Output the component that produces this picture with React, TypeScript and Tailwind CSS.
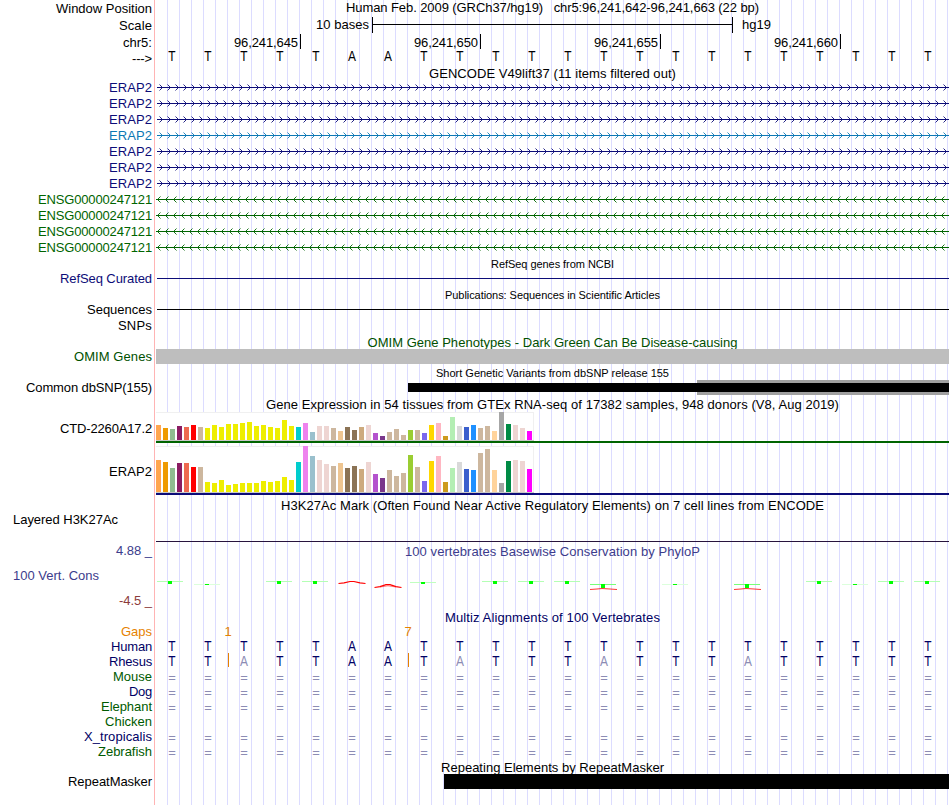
import { useLayoutEffect, useRef } from "react";

/** Text whose letter spacing is tuned so that it spans `w` pixels. */
function Fit({ children, w, className = "" }: { children: string; w?: number; className?: string }) {
  const ref = useRef<HTMLSpanElement>(null);
  useLayoutEffect(() => {
    const el = ref.current;
    if (!el || !w) return;
    el.style.letterSpacing = "0px";
    const natural = el.getBoundingClientRect().width;
    el.style.letterSpacing = `${(w - natural) / children.length}px`;
  }, [children, w]);
  return (
    <span ref={ref} className={`inline-block whitespace-pre ${className}`}>
      {children}
    </span>
  );
}

const NAVY = "text-[#0c0c78]";
const GREEN = "text-[#006400]";
const DEEP = "text-[#000064]";

type Label = { t: string; w?: number; gap?: string; c?: string };

const labels: Label[] = [
  { t: "Window Position", w: 96, gap: "mt-px" },
  { t: "Scale", w: 33, gap: "mt-0.5" },
  { t: "chr5:", w: 29, gap: "mt-0.5" },
  { t: "--->", w: 20, gap: "mt-px" },
  { t: "ERAP2", w: 43, gap: "mt-3.5", c: NAVY },
  { t: "ERAP2", w: 43, gap: "mt-px", c: NAVY },
  { t: "ERAP2", w: 43, gap: "mt-px", c: NAVY },
  { t: "ERAP2", w: 43, gap: "mt-px", c: "text-[#0c78b4]" },
  { t: "ERAP2", w: 43, gap: "mt-px", c: NAVY },
  { t: "ERAP2", w: 43, gap: "mt-px", c: NAVY },
  { t: "ERAP2", w: 43, gap: "mt-px", c: NAVY },
  { t: "ENSG00000247121", w: 114, gap: "mt-px", c: GREEN },
  { t: "ENSG00000247121", w: 114, gap: "mt-px", c: GREEN },
  { t: "ENSG00000247121", w: 114, gap: "mt-px", c: GREEN },
  { t: "ENSG00000247121", w: 114, gap: "mt-px", c: GREEN },
  { t: "RefSeq Curated", w: 92, gap: "mt-4", c: NAVY },
  { t: "Sequences", w: 65, gap: "mt-4" },
  { t: "SNPs", w: 34, gap: "mt-px" },
  { t: "OMIM Genes", w: 78, gap: "mt-4", c: "text-[#005000]" },
  { t: "Common dbSNP(155)", w: 126, gap: "mt-4" },
  { t: "CTD-2260A17.2", w: 92, gap: "mt-[26px]" },
  { t: "ERAP2", w: 43, gap: "mt-7" },
];

const species: { t: string; w: number; c: string }[] = [
  { t: "Human", w: 41, c: DEEP },
  { t: "Rhesus", w: 43, c: DEEP },
  { t: "Mouse", w: 39, c: "text-[#005a00]" },
  { t: "Dog", w: 23, c: DEEP },
  { t: "Elephant", w: 51, c: "text-[#005a00]" },
  { t: "Chicken", w: 47, c: "text-[#005a00]" },
  { t: "X_tropicalis", w: 68, c: DEEP },
  { t: "Zebrafish", w: 54, c: "text-[#005a00]" },
];

function LabelColumn() {
  return (
    <div className="flex w-[154px] shrink-0 flex-col items-end pr-0.5">
      {labels.map((l, i) => (
        <div key={i} className={`h-[15px] ${l.gap} ${l.c ?? ""}`}>
          <Fit w={l.w}>{l.t}</Fit>
        </div>
      ))}
      <div className="mt-[33px] h-[15px] self-start pl-[13px]">
        <Fit w={105}>Layered H3K27Ac</Fit>
      </div>
      <div className="mt-4 h-[15px] text-[#3c3c8c]"><Fit w={36}>4.88 _</Fit></div>
      <div className="mt-2.5 h-[15px] self-start pl-[13px] text-[#3c3c8c]">
        <Fit w={86}>100 Vert. Cons</Fit>
      </div>
      <div className="mt-2.5 h-[15px] text-[#8c3c3c]"><Fit w={33}>-4.5 _</Fit></div>
      <div className="mt-4 h-[15px] text-[#e68200]"><Fit w={31}>Gaps</Fit></div>
      {species.map((s) => (
        <div key={s.t} className={`h-[15px] ${s.c}`}>
          <Fit w={s.w}>{s.t}</Fit>
        </div>
      ))}
      <div className="mt-[15px] h-[15px]"><Fit w={84}>RepeatMasker</Fit></div>
    </div>
  );
}

function Arrows({ dir, color }: { dir: "r" | "l"; color: string }) {
  let d = "";
  for (let k = 0; k < 99; k++) {
    const x = dir === "r" ? 6.5 + 8 * k : 1.5 + 8 * k;
    const b = dir === "r" ? x - 3 : x + 3;
    d += `M${b} 4.5L${x} 7.5L${b} 10.5`;
  }
  return (
    <svg width="793" height="16" className="block" stroke={color} fill="none">
      <path d={dir === "r" ? "M1 7.5H793" : "M0 7.5H793"} />
      <path d={d} strokeWidth="0.9" />
    </svg>
  );
}

function Title({ t, w, className }: { t: string; w: number; className: string }) {
  return (
    <div className={`flex justify-center ${className}`}>
      <Fit w={w}>{t}</Fit>
    </div>
  );
}

function Bases({ seq, className }: { seq: string; className: string }) {
  return (
    <div className={`-ml-0.5 flex h-[15px] ${className}`}>
      {seq.split("").map((b, i) => (
        <span
          key={i}
          className={`w-9 shrink-0 text-center ${b === "=" ? "" : "scale-x-[.85] text-[14px] leading-[14px]"} ${b === "a" ? "text-[#8c8cb4]" : ""}`}
        >
          {b.toUpperCase()}
        </span>
      ))}
    </div>
  );
}

const tissueColors = [
  "#FFA54F", "#EE9A00", "#8FBC8F", "#8B1C62", "#EE6A50", "#FF0000", "#CDB79E",
  ...Array<string>(13).fill("#EEEE00"),
  "#00CDCD", "#EE82EE", "#9AC0CD", "#EED5D2", "#EED5D2", "#CDB79E", "#EEC591", "#8B7355", "#8B7355",
  "#CDAA7D", "#EED5D2", "#B452CD", "#7A378B", "#CDB79E", "#CDB79E", "#CDB79E", "#9ACD32", "#CDB79E",
  "#7A67EE", "#FFD700", "#FFB6C1", "#CD9B1D", "#B4EEB4", "#D9D9D9", "#3A5FCD", "#1E90FF", "#CDB79E",
  "#CDB79E", "#FFD39B", "#A6A6A6", "#008B45", "#EED5D2", "#EED5D2", "#FF00FF",
];
const ctd = [15,12,11,14,13,15,13,12,15,13,16,16,17,18,14,15,13,12,20,14,13,17,8,14,14,12,9,13,10,13,15,7,4,8,11,5,10,10,7,15,17,4,23,14,13,15,12,14,9,28,16,15,12,9];
const erap = [32,30,24,29,29,25,25,10,9,12,7,8,9,9,9,11,10,11,15,12,30,46,36,32,28,26,29,24,26,23,30,18,14,22,16,19,37,25,11,31,36,10,24,30,23,22,39,43,22,9,31,32,31,23];

function Expression({ data, className, line }: { data: number[]; className: string; line: string }) {
  return (
    <div className={className}>
      <div className="flex h-full w-[378px] items-end gap-0.5 border-b border-b-[#c8c8c8] bg-white shadow-[inset_-1px_1px_0_#f0f0f0]">
        {data.map((h, i) => (
          <div key={i} className="w-[5px] shrink-0" style={{ height: h, background: tissueColors[i] }} />
        ))}
      </div>
      <div className={`h-0.5 ${line}`} />
    </div>
  );
}

/* Column index, top of the mark, its height and the tint of its hairline. */
const marks: [number, number, number, string][] = [
  [0, 6, 3, "#b4ffb4"], [1, 9, 1, "#dcffdc"], [3, 6, 3, "#b4ffb4"], [4, 6, 3, "#b4ffb4"],
  [7, 7, 2, "#c0ffc0"], [9, 6, 3, "#b4ffb4"], [10, 6, 3, "#b4ffb4"], [11, 6, 3, "#b4ffb4"],
  [12, 9, 4, "#78ff78"], [14, 9, 1, "#dcffdc"], [16, 9, 4, "#78ff78"], [18, 6, 3, "#b4ffb4"],
  [19, 9, 1, "#dcffdc"], [20, 6, 3, "#b4ffb4"], [21, 6, 3, "#b4ffb4"],
];

function Conservation() {
  return (
    <svg width="793" height="24" className="block">
      {marks.map(([k, y, h, c]) => (
        <g key={k}>
          <rect x={36 * k + (k ? 2 : 1)} y={y} width="26" height="1" fill={c} />
          <rect x={36 * k + (k ? 13 : 12)} y={y} width="4" height={h} fill="#00ff00" />
        </g>
      ))}
      <g stroke="#ff0000" fill="none">
        <path d="M182.5 8.5L188 7.8L194 6.5H198L204 7.8L209.5 8.5" strokeWidth="1.2" />
        <path d="M218.5 12.5L224 11.6L230 9.6H234L240 11.6L245.5 12.5" strokeWidth="1.2" />
        <path d="M224 12L232 10.8L240 12" strokeWidth="0.5" />
        <path d="M434 14.5L441 14L446 13.5L454 14L461 14.5" strokeWidth="0.8" />
        <path d="M578 14.5L585 14L590 13.5L598 14L605 14.5" strokeWidth="0.8" />
      </g>
    </svg>
  );
}

const EQ = "======================";

function Tracks() {
  return (
    <div className="ml-px flex w-[793px] shrink-0 flex-col bg-[linear-gradient(to_right,#dcdcff_1px,transparent_1px)] bg-size-[12px_100%] bg-position-[11px_0]">
      <Title t="Human Feb. 2009 (GRCh37/hg19)   chr5:96,241,642-96,241,663 (22 bp)" w={413} className="h-[17px]" />
      <div className="flex h-[17px]">
        <div className="w-[213px] text-right"><Fit w={53}>10 bases</Fit></div>
        <div className="ml-[3px] flex h-4 w-[361px] items-center border-x border-black">
          <div className="mb-px h-px w-full bg-black" />
        </div>
        <Fit w={29} className="ml-[9px]">hg19</Fit>
      </div>
      <div className="-ml-[35px] flex h-[15px] leading-[13px]">
        {["96,241,645", "96,241,650", "96,241,655", "96,241,660"].map((n) => (
          <div key={n} className="flex w-[180px] shrink-0 justify-end border-r border-black pt-0.5 pr-0.5">
            <Fit w={64}>{n}</Fit>
          </div>
        ))}
      </div>
      <Bases seq="TTTTTAATTTTTTTTTTTTTTT" className="" />
      <Title t="GENCODE V49lift37 (11 items filtered out)" w={247} className="mt-0.5 h-3.5" />
      {["#0c0c78", "#0c0c78", "#0c0c78", "#0c78b4", "#0c0c78", "#0c0c78", "#0c0c78"].map((c, i) => (
        <Arrows key={i} dir="r" color={c} />
      ))}
      {[0, 1, 2, 3].map((i) => (
        <Arrows key={i} dir="l" color="#006400" />
      ))}

      <Title t="RefSeq genes from NCBI" w={123} className="mt-0.5 h-5 text-[11px] leading-3" />
      <div className="ml-px h-px bg-[#0c0c78]" />
      <Title t="Publications: Sequences in Scientific Articles" w={215} className="mt-2.5 h-5 text-[11px] leading-3" />
      <div className="ml-px h-px bg-black" />

      <Title t="OMIM Gene Phenotypes - Dark Green Can Be Disease-causing" w={370} className="mt-[25px] h-3.5 text-[#005000]" />
      <div className="relative h-[15px] bg-[#bebebe]" />

      <Title t="Short Genetic Variants from dbSNP release 155" w={233} className="mt-[3px] h-[13px] text-[11px] leading-3" />
      <div className="grid h-[15px] items-center">
        <div className="col-start-1 row-start-1 ml-[541px] h-[15px] bg-[#a0a0a0]" />
        <div className="relative col-start-1 row-start-1 ml-[252px] h-[9px] bg-black" />
      </div>

      <Title t="Gene Expression in 54 tissues from GTEx RNA-seq of 17382 samples, 948 donors (V8, Aug 2019)" w={573} className="mt-0.5 h-[15px]" />
      <Expression data={ctd} className="h-[29px]" line="bg-[#006400]" />
      <Expression data={erap} className="mt-[5px] h-[47px]" line="bg-[#0c0c78]" />

      <Title t="H3K27Ac Mark (Often Found Near Active Regulatory Elements) on 7 cell lines from ENCODE" w={543} className="mt-[5px] h-[15px]" />
      <div className="mt-7 h-px bg-[#28143c]" />
      <Title t="100 vertebrates Basewise Conservation by PhyloP" w={295} className="mt-0.5 h-[15px] text-[#3c3c8c]" />
      <div className="mt-4">
        <Conservation />
      </div>
      <Title t="Multiz Alignments of 100 Vertebrates" w={215} className="mt-[11px] h-3.5 text-[#000064]" />
      <div className="flex h-[15px] text-[#e68200]">
        <span className="ml-[62px] w-5 text-center">1</span>
        <span className="ml-40 w-5 text-center">7</span>
      </div>
      <Bases seq="TTTTTAATTTTTTTTTTTTTTT" className="text-[#000064]" />
      <div className="relative">
        <Bases seq="TTaTTAATaTTTaTTTaTTTTT" className="text-[#000064]" />
        <div className="absolute top-[-1px] left-[72px] h-3.5 w-px bg-[#e68200]" />
        <div className="absolute top-[-1px] left-[252px] h-3.5 w-px bg-[#e68200]" />
      </div>
      {[true, true, true, false, true, true].map((on, i) => (
        <Bases key={i} seq={on ? EQ : ""} className="relative top-px text-[#8c8cb4]" />
      ))}
      <Title t="Repeating Elements by RepeatMasker" w={223} className="mt-px h-3.5" />
      <div className="relative ml-72 h-[15px] bg-black" />
    </div>
  );
}

export default function App() {
  return (
    <div className="flex h-[805px] w-[950px] overflow-hidden bg-white font-['Liberation_Sans',Arial,sans-serif] text-[13px] leading-[15px] text-black">
      <LabelColumn />
      <div className="w-px shrink-0 bg-[#ffb4b4]" />
      <Tracks />
    </div>
  );
}
